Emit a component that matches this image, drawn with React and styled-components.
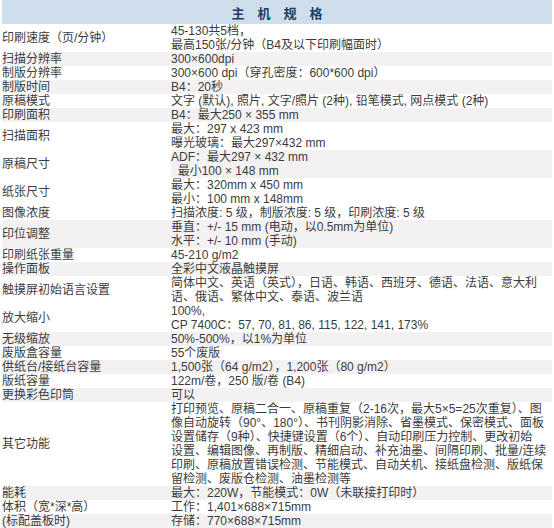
import React from 'react';
import styled, { createGlobalStyle } from 'styled-components';

const GlobalStyle = createGlobalStyle`
  body {
    margin: 0;
    background: #ffffff;
    font-family: "Liberation Sans", "Noto Sans CJK SC", sans-serif;
  }
`;

const SpecTable = styled.div`
  width: 550px;
  margin-left: 2px;
  display: flex;
  flex-direction: column;
`;

const TitleBar = styled.div`
  height: 24px;
  background-color: #cfdeed;
  display: flex;
  align-items: center;
  justify-content: center;
  font-size: 13px;
  font-weight: 700;
  color: #1b3f66;
`;

const Row = styled.div`
  display: grid;
  grid-template-columns: 169px 1fr;
  background-color: ${(p) => (p.$shade === 'row' ? '#f3f1f2' : '#ffffff')};
  font-size: 12px;
  line-height: 14px;
  color: #3c3c3c;
`;

const Label = styled.div`
  display: flex;
  align-items: center;
  white-space: nowrap;
`;

const Value = styled.div`
  white-space: nowrap;
  background-color: ${(p) => (p.$shade ? '#f3f1f2' : 'transparent')};
`;

const specs = [
  { label: '印刷速度（页/分钟）', lines: ['45-130共5档，', '最高150张/分钟（B4及以下印刷幅面时）'] },
  { label: '扫描分辨率', lines: ['300×600dpi'], shade: 'row' },
  { label: '制版分辨率', lines: ['300×600 dpi（穿孔密度：600*600 dpi）'] },
  { label: '制版时间', lines: ['B4：20秒'], shade: 'row' },
  { label: '原稿模式', lines: ['文字 (默认), 照片, 文字/照片 (2种), 铅笔模式, 网点模式 (2种)'] },
  { label: '印刷面积', lines: ['B4：最大250 × 355 mm'], shade: 'row' },
  { label: '扫描面积', lines: ['最大：297 x 423 mm', '曝光玻璃：最大297×432 mm'] },
  { label: '原稿尺寸', lines: ['ADF：最大297 × 432 mm', '\u00a0\u00a0最小100 × 148 mm'], shade: 'value' },
  { label: '纸张尺寸', lines: ['最大：320mm x 450 mm', '最小：100 mm x 148mm'] },
  { label: '图像浓度', lines: ['扫描浓度: 5 级，制版浓度: 5 级，印刷浓度: 5 级'] },
  { label: '印位调整', lines: ['垂直：+/- 15 mm (电动，以0.5mm为单位)', '水平：+/- 10 mm (手动)'], shade: 'row' },
  { label: '印刷纸张重量', lines: ['45-210 g/m2'] },
  { label: '操作面板', lines: ['全彩中文液晶触摸屏'], shade: 'row' },
  {
    label: '触摸屏初始语言设置',
    lines: ['简体中文、英语（英式），日语、韩语、西班牙、德语、法语、意大利', '语、俄语、繁体中文、泰语、波兰语'],
  },
  { label: '放大缩小', lines: ['100%,', 'CP 7400C：57, 70, 81, 86, 115, 122, 141, 173%'] },
  { label: '无级缩放', lines: ['50%-500%，以1%为单位'], shade: 'row' },
  { label: '废版盒容量', lines: ['55个废版'] },
  { label: '供纸台/接纸台容量', lines: ['1,500张（64 g/m2），1,200张（80 g/m2）'], shade: 'row' },
  { label: '版纸容量', lines: ['122m/卷，250 版/卷 (B4)'] },
  { label: '更换彩色印筒', lines: ['可以'], shade: 'row' },
  {
    label: '其它功能',
    lines: [
      '打印预览、原稿二合一、原稿重复（2-16次，最大5×5=25次重复）、图',
      '像自动旋转（90°、180°）、书刊阴影消除、省墨模式、保密模式、面板',
      '设置储存（9种）、快捷键设置（6个）、自动印刷压力控制、更改初始',
      '设置、编辑图像、再制版、精细启动、补充油墨、间隔印刷、批量/连续',
      '印刷、原稿放置错误检测、节能模式、自动关机、接纸盘检测、版纸保',
      '留检测、废版仓检测、油墨检测等',
    ],
  },
  { label: '能耗', lines: ['最大：220W，节能模式：0W（未联接打印时）'], shade: 'row' },
  { label: '体积（宽*深*高）', lines: ['工作：1,401×688×715mm'] },
  { label: '(标配盖板时)', lines: ['存储：770×688×715mm'], shade: 'row' },
];

function App() {
  return (
    <>
      <GlobalStyle />
      <SpecTable>
        <TitleBar>主　机　规　格</TitleBar>
        {specs.map((s) => (
          <Row key={s.label} $shade={s.shade}>
            <Label>{s.label}</Label>
            <Value $shade={s.shade === 'value'}>
              {s.lines.map((line, i) => (
                <div key={i}>{line}</div>
              ))}
            </Value>
          </Row>
        ))}
      </SpecTable>
    </>
  );
}

export default App;
